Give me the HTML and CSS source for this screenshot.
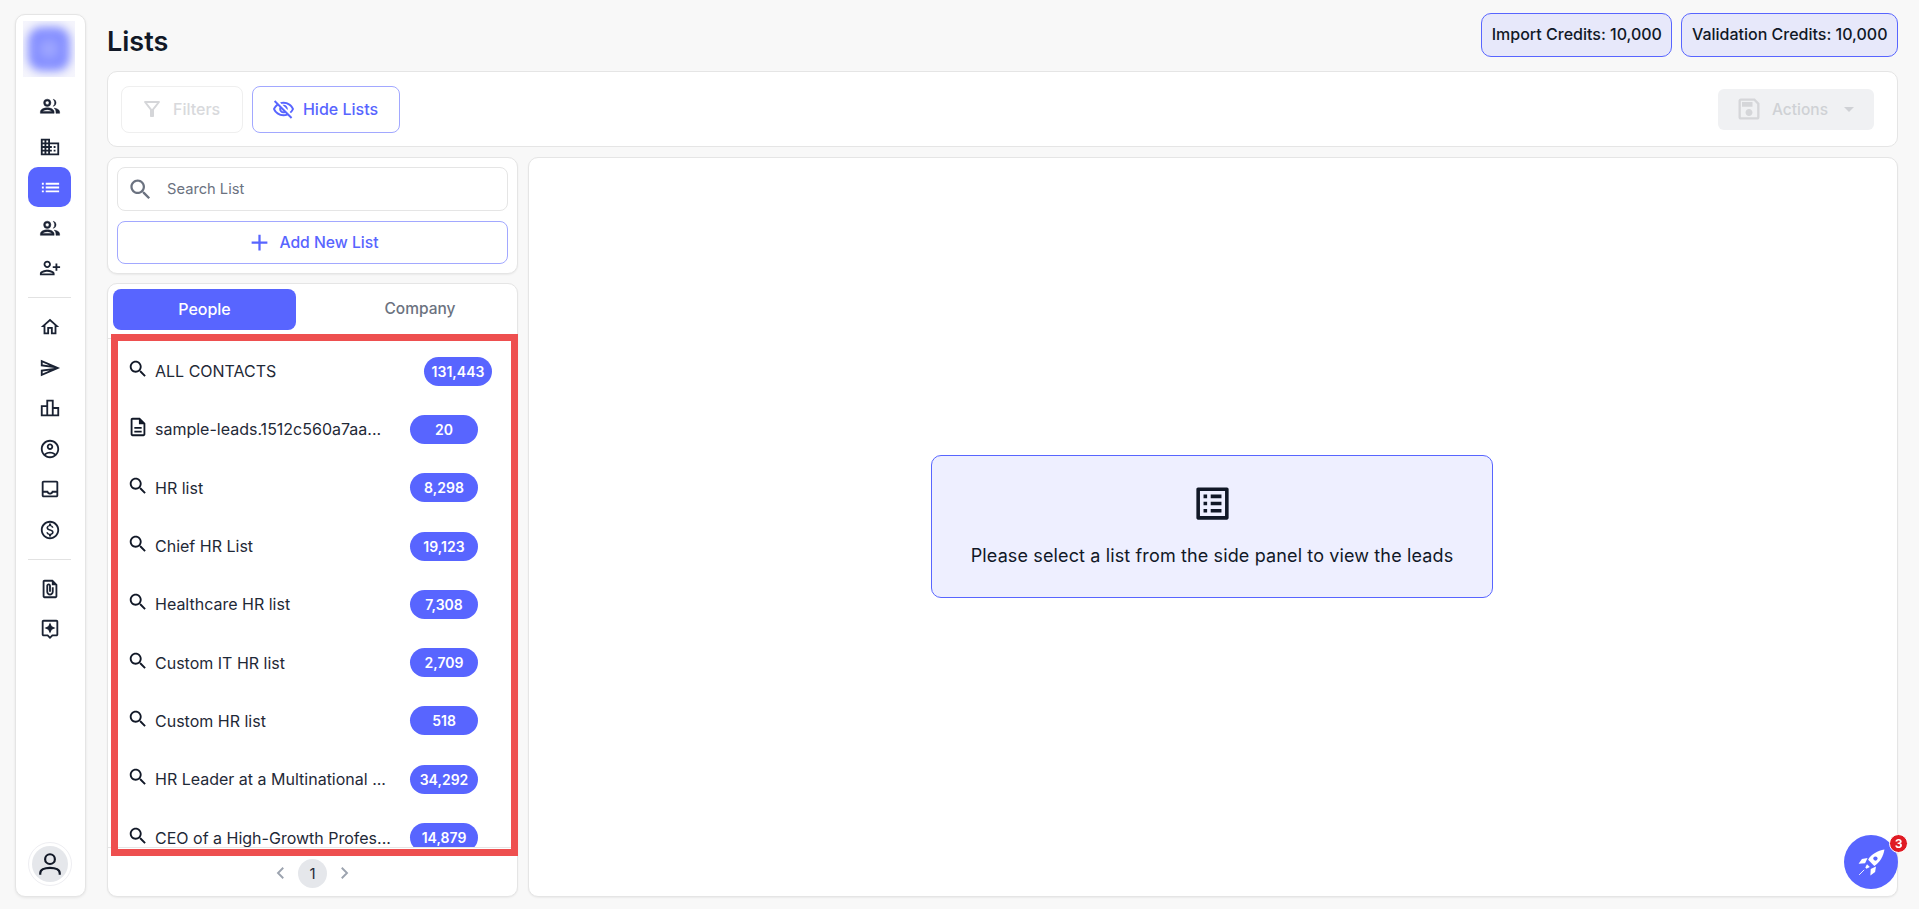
FILE: index.html
```html
<!DOCTYPE html>
<html>
<head>
    <title>Lists</title>
    <link rel="stylesheet" href="styles.css">
</head>
<body>
    <div class="app">
        <!-- Left icon rail -->
        <nav class="rail">
            <div class="logo"><div class="logo-blur"></div></div>
            <div class="rail-group first">
                <a class="rail-item"><svg class="ico" viewBox="0 0 24 24"><path class="fill bold" d="M9 12.5a4 4 0 1 0 0-8 4 4 0 0 0 0 8zm0-2a2 2 0 1 1 0-4 2 2 0 0 1 0 4zM15.5 4.6a4 4 0 0 1 0 7.8 5.5 5.500 0 0 0 0-7.8zM9 14c-3.500 0-7.500 1.600-7.500 4.500V20h15v-1.500C16.500 15.600 12.500 14 9 14zm-5.200 4c.6-1 3-2 5.200-2s4.600 1 5.200 2H3.800zM16.500 14.300c2.500.5 6 1.600 6 4.200V20h-4v-1.500c0-1.700-.8-3.200-2-4.200z"/></svg></a>
                <a class="rail-item"><svg class="ico" viewBox="0 0 24 24"><path class="fill" d="M12 7V3H2v18h20V7H12zM6 19H4v-2h2v2zm0-4H4v-2h2v2zm0-4H4V9h2v2zm0-4H4V5h2v2zm4 12H8v-2h2v2zm0-4H8v-2h2v2zm0-4H8V9h2v2zm0-4H8V5h2v2zm10 12h-8v-2h2v-2h-2v-2h2v-2h-2V9h8v10zm-2-8h-2v2h2v-2zm0 4h-2v2h2v-2z"/></svg></a>
                <a class="rail-item active"><svg class="ico-list" viewBox="0 0 24 24"><path class="fill-white" d="M3 13h2v-2H3v2zm0 4h2v-2H3v2zm0-8h2V7H3v2zm4 4h14v-2H7v2zm0 4h14v-2H7v2zM7 7v2h14V7H7z"/></svg></a>
                <a class="rail-item"><svg class="ico" viewBox="0 0 24 24"><path class="fill bold" d="M9 12.5a4 4 0 1 0 0-8 4 4 0 0 0 0 8zm0-2a2 2 0 1 1 0-4 2 2 0 0 1 0 4zM15.5 4.6a4 4 0 0 1 0 7.8 5.5 5.500 0 0 0 0-7.8zM9 14c-3.500 0-7.500 1.600-7.500 4.500V20h15v-1.500C16.500 15.600 12.500 14 9 14zm-5.200 4c.6-1 3-2 5.200-2s4.600 1 5.200 2H3.800zM16.500 14.300c2.500.5 6 1.600 6 4.200V20h-4v-1.500c0-1.700-.8-3.200-2-4.200z"/></svg></a>
                <a class="rail-item"><svg class="ico" viewBox="0 0 24 24"><path class="fill" transform="matrix(-1 0 0 1 24 0)" d="M15 12c2.210 0 4-1.790 4-4s-1.790-4-4-4-4 1.790-4 4 1.790 4 4 4zm0-6c1.100 0 2 .9 2 2s-.9 2-2 2-2-.9-2-2 .9-2 2-2zm0 8c-2.670 0-8 1.340-8 4v2h16v-2c0-2.660-5.330-4-8-4zm-6 4c.22-.72 3.310-2 6-2 2.700 0 5.800 1.290 6 2H9zm-3-3v-3h3v-2H6V7H4v3H1v2h3v3h2z"/></svg></a>
            </div>
            <div class="rail-divider"></div>
            <div class="rail-group">
                <a class="rail-item"><svg class="ico" viewBox="0 0 24 24"><path class="fill" d="M12 5.690l5 4.500V18h-2v-6H9v6H7v-7.810l5-4.500M12 3L2 12h3v8h6v-6h2v6h6v-8h3L12 3z"/></svg></a>
                <a class="rail-item"><svg class="ico" viewBox="0 0 24 24"><path class="fill" d="M4.010 6.030l7.510 3.220-7.520-1 .01-2.220m7.500 8.720L4 17.970v-2.220l7.510-1M2.010 3L2 10l15 2-15 2 .01 7L23 12 2.010 3z"/></svg></a>
                <a class="rail-item"><svg class="ico" viewBox="0 0 24 24"><path class="fill" d="M16 11V3H8v6H2v12h20V11h-6zm-6-6h4v14h-4V5zm-6 6h4v8H4v-8zm16 8h-4v-6h4v6z"/></svg></a>
                <a class="rail-item"><svg class="ico" viewBox="0 0 24 24"><path class="fill" d="M12 2C6.480 2 2 6.480 2 12s4.480 10 10 10 10-4.480 10-10S17.520 2 12 2zM7.350 18.500C8.660 17.560 10.260 17 12 17s3.340.56 4.650 1.500C15.340 19.440 13.740 20 12 20s-3.340-.56-4.650-1.500zm10.790-1.380C16.450 15.800 14.320 15 12 15s-4.450.8-6.140 2.120C4.700 15.730 4 13.950 4 12c0-4.420 3.580-8 8-8s8 3.580 8 8c0 1.950-.7 3.730-1.860 5.120zM12 6c-1.930 0-3.500 1.570-3.500 3.500S10.070 13 12 13s3.500-1.570 3.500-3.500S13.930 6 12 6zm0 5c-.83 0-1.500-.67-1.500-1.500S11.170 8 12 8s1.500.67 1.500 1.500S12.830 11 12 11z"/></svg></a>
                <a class="rail-item"><svg class="ico" viewBox="0 0 24 24"><path class="fill" d="M19 3H5c-1.100 0-2 .9-2 2v14c0 1.100.9 2 2 2h14c1.100 0 2-.9 2-2V5c0-1.100-.9-2-2-2zm0 16H5v-3h3.560c.69 1.190 1.970 2 3.450 2s2.750-.81 3.450-2H19v3zm0-5h-4.990c0 1.100-.9 2-2 2s-2-.9-2-2H5V5h14v9z"/></svg></a>
                <a class="rail-item"><svg class="ico" viewBox="0 0 24 24"><path class="fill" d="M12 2C6.480 2 2 6.480 2 12s4.480 10 10 10 10-4.480 10-10S17.520 2 12 2zm0 18c-4.410 0-8-3.590-8-8s3.590-8 8-8 8 3.590 8 8-3.590 8-8 8zm.31-8.860c-1.770-.45-2.340-.94-2.340-1.670 0-.84.79-1.430 2.100-1.430 1.380 0 1.900.66 1.940 1.640h1.710c-.05-1.340-.87-2.570-2.490-2.970V5H10.900v1.690c-1.510.32-2.720 1.300-2.720 2.810 0 1.790 1.490 2.690 3.660 3.210 1.950.46 2.340 1.150 2.340 1.870 0 .53-.39 1.390-2.100 1.390-1.600 0-2.230-.72-2.320-1.640H8.040c.1 1.700 1.360 2.660 2.860 2.970V19h2.340v-1.670c1.520-.29 2.720-1.160 2.730-2.770-.01-2.200-1.900-2.960-3.660-3.420z"/></svg></a>
            </div>
            <div class="rail-divider"></div>
            <div class="rail-group">
                <a class="rail-item"><svg class="ico" viewBox="0 0 24 24"><path class="fill" d="M15 2H6c-1.100 0-2 .9-2 2v16c0 1.100.9 2 2 2h12c1.100 0 2-.9 2-2V7l-5-5zM6 20V4h8v4h4v12H6zm10-10v5c0 2.210-1.790 4-4 4s-4-1.790-4-4V8.500c0-1.470 1.260-2.640 2.750-2.490 1.300.13 2.250 1.300 2.250 2.610V15h-2V8.500c0-.28-.22-.5-.5-.5s-.5.22-.5.5V15c0 1.100.9 2 2 2s2-.9 2-2v-5h2z"/></svg></a>
                <a class="rail-item"><svg class="ico" viewBox="0 0 24 24"><path class="fill" d="M19 2H5c-1.100 0-2 .9-2 2v14c0 1.100.9 2 2 2h4l3 3 3-3h4c1.100 0 2-.9 2-2V4c0-1.100-.9-2-2-2zm0 16h-4.830L12 20.170 9.830 18H5V4h14v14zm-7-1l1.880-4.120L18 11l-4.120-1.880L12 5l-1.880 4.120L6 11l4.120 1.880z"/></svg></a>
            </div>
            <div class="avatar-wrap">
                <div class="avatar"><svg class="avatar-ico" viewBox="0 0 24 24"><circle class="line" cx="12" cy="7.500" r="4.500"/><path class="line" d="M3 22v-1.500c0-3 3.500-5 9-5s9 2 9 5V22"/></svg></div>
            </div>
        </nav>

        <main class="main">
            <header class="top">
                <h1>Lists</h1>
                <div class="credits">
                    <span class="credit">Import Credits: 10,000</span>
                    <span class="credit">Validation Credits: 10,000</span>
                </div>
            </header>

            <section class="toolbar">
                <button class="btn btn-off"><svg class="filter-ico" viewBox="0 0 24 24"><path class="grey" d="M7 6h10l-5.010 6.300L7 6zm-2.750-.39C6.270 8.200 10 13 10 13v6c0 .55.450 1 1 1h2c.55 0 1-.45 1-1v-6s3.720-4.800 5.740-7.390c.51-.66.04-1.610-.79-1.610H5.040c-.83 0-1.300.95-.79 1.610z"/></svg>Filters</button>
                <button class="btn btn-hide"><svg class="hide-ico" viewBox="0 0 24 24"><path class="blue" d="M12 6c3.790 0 7.170 2.130 8.820 5.500-.59 1.220-1.420 2.270-2.410 3.120l1.410 1.410c1.390-1.230 2.490-2.770 3.180-4.530C21.270 7.110 17 4 12 4c-1.270 0-2.490.2-3.640.57l1.650 1.650C10.660 6.090 11.320 6 12 6zm-1.070 1.140L13 9.210c.57.25 1.030.71 1.280 1.280l2.070 2.070c.08-.34.14-.7.14-1.070C16.500 9.010 14.480 7 12 7c-.37 0-.72.05-1.070.14zM2.010 3.870l2.680 2.680C3.060 7.830 1.770 9.530 1 11.500 2.730 15.890 7 19 12 19c1.520 0 2.980-.29 4.320-.82l3.420 3.420 1.410-1.410L3.420 2.450 2.010 3.870zm7.500 7.500l2.610 2.610c-.04.01-.08.02-.12.02-1.380 0-2.500-1.120-2.500-2.500 0-.05.01-.08.01-.13zm-3.400-3.400l1.750 1.750c-.23.55-.36 1.150-.36 1.780 0 2.480 2.020 4.500 4.500 4.500.63 0 1.230-.13 1.770-.36l.98.98c-.88.24-1.800.38-2.750.38-3.790 0-7.170-2.130-8.820-5.500.7-1.430 1.720-2.610 2.930-3.530z"/></svg>Hide Lists</button>
                <button class="btn-actions"><svg class="save-ico" viewBox="0 0 24 24"><path class="grey" d="M17 3H5c-1.110 0-2 .9-2 2v14c0 1.100.89 2 2 2h14c1.100 0 2-.9 2-2V7l-4-4zm2 16H5V5h11.170L19 7.830V19zm-7-7c-1.660 0-3 1.340-3 3s1.340 3 3 3 3-1.340 3-3-1.340-3-3-3zM6 6h9v4H6z"/></svg><span>Actions</span><i class="caret"></i></button>
            </section>

            <div class="panels">
                <aside class="side">
                    <div class="card search-card">
                        <div class="search">
                            <svg class="search-ico" viewBox="0 0 24 24"><path class="grey-dark" d="M15.500 14h-.79l-.28-.27C15.410 12.590 16 11.110 16 9.500 16 5.910 13.090 3 9.500 3S3 5.910 3 9.500 5.910 16 9.500 16c1.610 0 3.090-.59 4.230-1.570l.27.28v.79l5 4.990L20.490 19l-4.990-5zm-6 0C7.010 14 5 11.990 5 9.500S7.010 5 9.500 5 14 7.010 14 9.500 11.990 14 9.500 14z"/></svg>
                            <span class="search-text">Search List</span>
                        </div>
                        <button class="add-btn"><svg class="plus" viewBox="0 0 24 24"><path class="blue" d="M19 13h-6v6h-2v-6H5v-2h6V5h2v6h6v2z"/></svg><span class="add-text">Add New List</span></button>
                    </div>

                    <div class="card list-card">
                        <div class="tabs">
                            <div class="tab active">People</div>
                            <div class="tab">Company</div>
                        </div>
                        <div class="list-wrap">
                            <div class="list">
                                <div class="row wide"><svg class="row-ico" viewBox="0 0 24 24"><use href="#search"/></svg><span class="name">ALL CONTACTS</span><span class="count">131,443</span></div>
                                <div class="row"><svg class="row-ico" viewBox="0 0 24 24"><path class="dark" d="M8 16h8v2H8zm0-4h8v2H8zm6-10H6c-1.100 0-2 .9-2 2v16c0 1.100.89 2 1.990 2H18c1.100 0 2-.9 2-2V8l-6-6zm4 18H6V4h7v5h5v11z"/></svg><span class="name">sample-leads.1512c560a7aa...</span><span class="count">20</span></div>
                                <div class="row"><svg class="row-ico" viewBox="0 0 24 24"><use href="#search"/></svg><span class="name">HR list</span><span class="count">8,298</span></div>
                                <div class="row"><svg class="row-ico" viewBox="0 0 24 24"><use href="#search"/></svg><span class="name">Chief HR List</span><span class="count">19,123</span></div>
                                <div class="row"><svg class="row-ico" viewBox="0 0 24 24"><use href="#search"/></svg><span class="name">Healthcare HR list</span><span class="count">7,308</span></div>
                                <div class="row"><svg class="row-ico" viewBox="0 0 24 24"><use href="#search"/></svg><span class="name">Custom IT HR list</span><span class="count">2,709</span></div>
                                <div class="row"><svg class="row-ico" viewBox="0 0 24 24"><use href="#search"/></svg><span class="name">Custom HR list</span><span class="count">518</span></div>
                                <div class="row"><svg class="row-ico" viewBox="0 0 24 24"><use href="#search"/></svg><span class="name">HR Leader at a Multinational ...</span><span class="count">34,292</span></div>
                                <div class="row"><svg class="row-ico" viewBox="0 0 24 24"><use href="#search"/></svg><span class="name">CEO of a High-Growth Profes...</span><span class="count">14,879</span></div>
                            </div>
                            <!-- red annotation frame on top of the list -->
                            <div class="highlight"></div>
                        </div>
                        <div class="pager">
                            <svg class="chev" viewBox="0 0 24 24"><path class="chev-line" d="M15 5l-7 7 7 7"/></svg>
                            <span class="page">1</span>
                            <svg class="chev" viewBox="0 0 24 24"><path class="chev-line" d="M9 5l7 7-7 7"/></svg>
                        </div>
                    </div>
                </aside>

                <section class="card content">
                    <div class="empty">
                        <svg class="empty-ico" viewBox="0 0 24 24"><path class="dark" d="M19 5v14H5V5h14m1.100-2H3.900c-.5 0-.9.4-.9.9v16.200c0 .4.4.9.9.9h16.200c.4 0 .9-.5.9-.9V3.900c0-.5-.5-.9-.9-.9zM11 7h6v2h-6V7zm0 4h6v2h-6v-2zm0 4h6v2h-6zM7 7h2v2H7zm0 4h2v2H7zm0 4h2v2H7z"/></svg>
                        <p>Please select a list from the side panel to view the leads</p>
                    </div>
                </section>
            </div>
        </main>
    </div>

    <div class="fab">
        <svg class="rocket" viewBox="0 0 24 24">
            <path fill="#fff" d="M23.500.5C17.500 1.500 12 4.500 9 9.500l5.500 5.500c5-3 8-8.500 9-14.500z"/>
            <path fill="#fff" d="M8.500 8 3.500 8.800.5 13l5.800-.3zM16 15.500l-.8 5-4.200 3 .3-5.800z"/>
            <path fill="#fff" d="M8 13.500l2.500 2.500-3 1.500-1-1z"/>
            <circle cx="15.500" cy="8.500" r="1.900" fill="#5865ff"/>
            <path d="M5.500 18.500 1 23" stroke="#fff" stroke-width="0.800"/>
        </svg>
        <span class="badge">3</span>
    </div>

    <svg class="defs" width="0" height="0"><defs><path id="search" fill="#111827" d="M15.500 14h-.79l-.28-.27C15.410 12.590 16 11.110 16 9.500 16 5.910 13.090 3 9.500 3S3 5.910 3 9.500 5.910 16 9.500 16c1.610 0 3.090-.59 4.230-1.570l.27.28v.79l5 4.990L20.490 19l-4.990-5zm-6 0C7.010 14 5 11.990 5 9.500S7.010 5 9.500 5 14 7.010 14 9.500 11.990 14 9.500 14z"/></defs></svg>
</body>
</html>
```

FILE: styles.css
```css
html, body {
    height: 100%;
    margin: 0;
    padding: 0;
}

body {
    font-family: "Inter", "Liberation Sans", sans-serif;
    background: #f8f8f8;
    color: #111827;
    overflow: hidden;
}

button {
    font-family: inherit;
}

.defs {
    position: absolute;
}

.app {
    display: flex;
    gap: 21px;
    height: 909px;
    box-sizing: border-box;
    padding: 13px 21px 12px 15px;
}

/* rail */
.rail {
    width: 71px;
    box-sizing: border-box;
    margin-top: 1px;
    background: #fff;
    border: 1px solid #e5e5e5;
    border-radius: 10px;
    box-shadow: 0 1px 3px rgba(0, 0, 0, 0.08);
    display: flex;
    flex-direction: column;
    align-items: center;
    padding: 6px 3px 0 0;
}

.logo {
    width: 52px;
    height: 56px;
    background: #f5f5fc;
    overflow: hidden;
    display: flex;
    align-items: center;
    justify-content: center;
}

.logo-blur {
    width: 42px;
    height: 44px;
    border-radius: 14px;
    background: radial-gradient(circle, #aab1ff 0, #858fff 45%, #7f89ff 100%);
    filter: blur(5px);
}

.rail-group {
    display: flex;
    flex-direction: column;
    align-items: center;
    gap: 0.5px;
}

.rail-group.first {
    margin-top: 9px;
}

.rail-item {
    width: 43px;
    height: 40px;
    display: flex;
    align-items: center;
    justify-content: center;
    border-radius: 10px;
}

.rail-item.active {
    background: #5865ff;
}

.rail-item svg {
    margin-left: 2px;
}

.rail-divider {
    width: 43px;
    height: 1px;
    background: #e2e2e2;
    margin: 9px 0;
}

.ico {
    width: 22px;
    height: 22px;
}

.ico-list {
    width: 23px;
    height: 23px;
}

.fill {
    fill: #1a2233;
}

.bold {
    stroke: #1a2233;
    stroke-width: 0.5;
}

.fill-white {
    fill: #fff;
}

.line {
    fill: none;
    stroke: #111827;
    stroke-width: 2;
}

.avatar-wrap {
    margin-top: auto;
    margin-bottom: 10px;
    margin-left: 2px;
    width: 36px;
    height: 36px;
    padding: 3px;
    border: 1px solid #eeeef2;
    border-radius: 50%;
}

.avatar {
    width: 36px;
    height: 36px;
    border-radius: 50%;
    background: #e5e7eb;
    display: flex;
    align-items: center;
    justify-content: center;
}

.avatar-ico {
    width: 26px;
    height: 26px;
}

/* main */
.main {
    flex: 1;
    min-width: 0;
    display: flex;
    flex-direction: column;
}

.top {
    display: flex;
    justify-content: space-between;
    align-items: center;
    height: 44px;
}

h1 {
    margin: 0;
    padding-top: 12px;
    font-size: 27px;
    font-weight: 600;
    color: #111827;
}

.credits {
    display: flex;
    gap: 9px;
}

.credit {
    height: 42px;
    line-height: 41px;
    padding: 0 9.5px;
    background: #e7e8fa;
    border: 1px solid #5865ff;
    border-radius: 10px;
    font-size: 16px;
    font-weight: 500;
}

.toolbar {
    margin-top: 14px;
    height: 76px;
    box-sizing: border-box;
    background: #fff;
    border: 1px solid #e5e5e5;
    border-radius: 10px;
    display: flex;
    align-items: center;
    padding: 0 23px 0 13px;
    gap: 9px;
}

.btn {
    height: 47px;
    box-sizing: border-box;
    display: flex;
    align-items: center;
    background: #fff;
    border-radius: 8px;
    font-size: 16px;
    font-weight: 500;
}

.btn-off {
    width: 122px;
    border: 1px solid #efefef;
    color: #d8d9dc;
    padding-left: 18px;
    gap: 9px;
}

.btn-hide {
    width: 148px;
    border: 1px solid #a2a8ff;
    color: #5865ff;
    justify-content: center;
    padding-right: 8px;
    gap: 8px;
}

.filter-ico {
    width: 24px;
    height: 24px;
}

.hide-ico {
    width: 23px;
    height: 23px;
}

.save-ico {
    width: 28px;
    height: 28px;
}

.grey {
    fill: #d5d6d9;
}

.blue {
    fill: #5865ff;
}

.grey-dark {
    fill: #6b7280;
}

.dark {
    fill: #111827;
}

.btn-actions {
    margin-left: auto;
    width: 156px;
    height: 41px;
    border: 0;
    border-radius: 6px;
    background: #f0f1f3;
    color: #cfd1d5;
    font-size: 15.5px;
    font-weight: 500;
    display: flex;
    align-items: center;
    padding: 0 0 0 17px;
    gap: 9px;
}

.caret {
    margin-left: 7px;
    width: 0;
    height: 0;
    border-left: 5px solid transparent;
    border-right: 5px solid transparent;
    border-top: 5px solid #cfd1d5;
}

.panels {
    flex: 1;
    min-height: 0;
    margin-top: 10px;
    display: flex;
    gap: 10px;
}

.card {
    background: #fff;
    border: 1px solid #e5e5e5;
    border-radius: 10px;
    box-sizing: border-box;
    box-shadow: 0 1px 2px rgba(0, 0, 0, 0.06);
}

.side {
    width: 411px;
    display: flex;
    flex-direction: column;
    gap: 9px;
}

.search-card {
    height: 117px;
    padding: 9px;
    display: flex;
    flex-direction: column;
    gap: 10px;
}

.search {
    height: 44px;
    box-sizing: border-box;
    border: 1px solid #e5e5e5;
    border-radius: 8px;
    display: flex;
    align-items: center;
    padding-left: 9px;
    color: #6b7280;
    font-size: 14.7px;
}

.search-text {
    padding-bottom: 1px;
}

.search-ico {
    width: 27px;
    height: 27px;
    margin-right: 13px;
}

.add-btn {
    height: 43px;
    background: #fff;
    border: 1px solid #a2a8ff;
    border-radius: 8px;
    color: #5865ff;
    font-size: 15.7px;
    font-weight: 500;
    display: flex;
    align-items: center;
    justify-content: center;
    gap: 6px;
}

.add-text {
    padding-bottom: 1px;
}

.plus {
    width: 27px;
    height: 27px;
}

.list-card {
    flex: 1;
    min-height: 0;
    display: flex;
    flex-direction: column;
}

.tabs {
    flex: none;
    display: flex;
    height: 41px;
    padding: 5px 5px 8px;
}

.tab {
    flex: 1;
    display: flex;
    align-items: center;
    justify-content: center;
    padding: 0 0 2px 32px;
    border-radius: 8px;
    font-size: 15.5px;
    font-weight: 500;
    color: #6b7280;
}

.tab.active {
    flex: none;
    width: 183px;
    padding: 0 0 2px;
    background: #5865ff;
    color: #fff;
    font-size: 16px;
}

.list-wrap {
    position: relative;
    flex: none;
    height: 510px;
}

.list {
    height: 100%;
    box-sizing: border-box;
    overflow: hidden;
    border-top: 1px solid #e5e5e5;
    border-bottom: 1px solid #e5e5e5;
    padding-top: 3px;
}

.row {
    height: 58.3px;
    display: flex;
    align-items: center;
    padding-left: 19px;
    font-size: 16px;
    color: #1f2937;
}

.row-ico {
    width: 22px;
    height: 22px;
    margin-right: 6px;
    margin-top: -4px;
    flex: none;
}

.name {
    width: 255px;
    white-space: nowrap;
    overflow: hidden;
}

.count {
    width: 68px;
    height: 29px;
    line-height: 29px;
    text-align: center;
    border-radius: 15px;
    background: #5865ff;
    color: #fff;
    font-size: 14px;
    font-weight: 600;
    flex: none;
}

.row.wide .count {
    margin-left: 14px;
}

.highlight {
    position: absolute;
    top: -4px;
    left: 3px;
    right: -1px;
    bottom: -8px;
    border: 7px solid #ee4f4f;
    pointer-events: none;
}

.pager {
    flex: 1;
    display: flex;
    align-items: center;
    justify-content: center;
    padding-top: 2px;
    gap: 8px;
}

.chev {
    width: 18px;
    height: 18px;
}

.chev-line {
    fill: none;
    stroke: #9ca3af;
    stroke-width: 2.5;
}

.page {
    width: 29px;
    height: 29px;
    line-height: 29px;
    text-align: center;
    border-radius: 50%;
    background: #e5e7eb;
    font-size: 15px;
    color: #1f2937;
}

.content {
    flex: 1;
    min-width: 0;
    display: flex;
    align-items: center;
    justify-content: center;
}

.empty {
    width: 562px;
    height: 143px;
    box-sizing: border-box;
    background: #eeefff;
    border: 1px solid #5865ff;
    border-radius: 10px;
    display: flex;
    flex-direction: column;
    align-items: center;
    padding-top: 26px;
    margin-left: -2px;
    margin-top: -1px;
}

.empty-ico {
    width: 43px;
    height: 43px;
}

.empty p {
    margin: 19px 0 0;
    font-size: 18px;
    font-weight: 400;
    letter-spacing: 0.13px;
    line-height: 24px;
    white-space: nowrap;
}

/* floating help button */
.fab {
    position: fixed;
    left: 1844px;
    top: 835px;
    width: 54px;
    height: 54px;
    border-radius: 50%;
    background: #5865ff;
    display: flex;
    align-items: center;
    justify-content: center;
}

.rocket {
    width: 27px;
    height: 27px;
}

.badge {
    position: absolute;
    top: -1px;
    right: -10px;
    width: 17px;
    height: 17px;
    line-height: 17px;
    border: 1.5px solid #fff;
    border-radius: 50%;
    background: #e01b24;
    color: #fff;
    font-size: 12px;
    font-weight: 700;
    text-align: center;
}
```
